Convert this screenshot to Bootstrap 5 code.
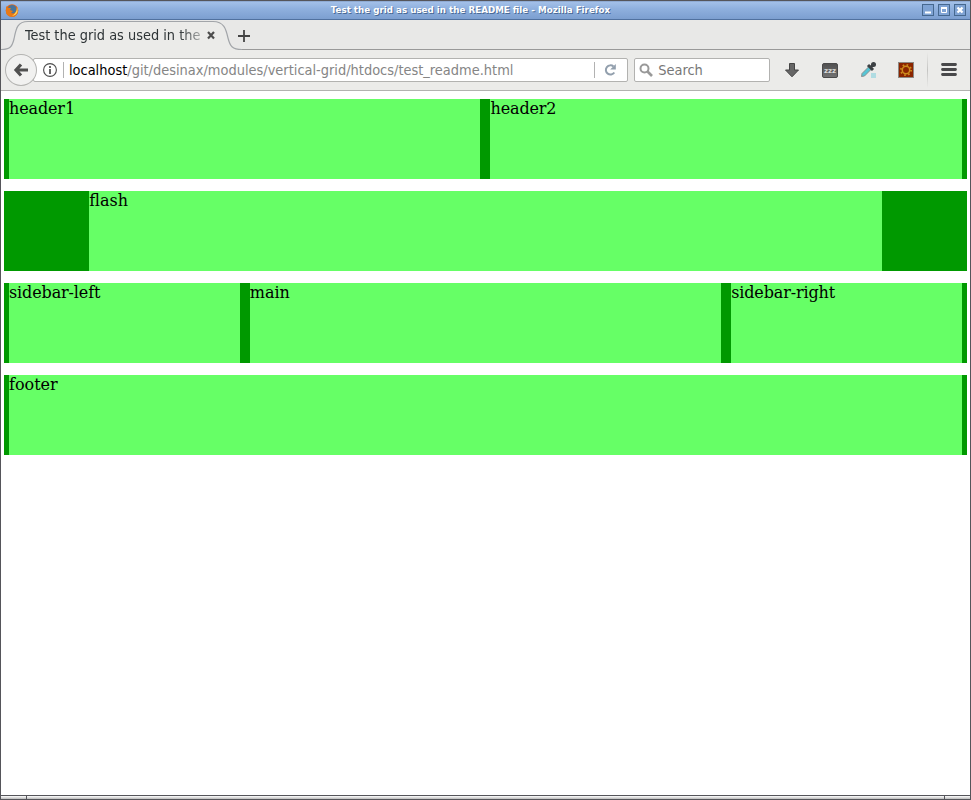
<!DOCTYPE html>
<html lang="en">
<head>
<meta charset="utf-8">
<meta name="viewport" content="width=device-width, initial-scale=1">
<title>Test the grid as used in the README file</title>
<link rel="stylesheet" href="https://cdn.jsdelivr.net/npm/bootstrap@5.3.0/dist/css/bootstrap.min.css">
<style>
body { font-family: "DejaVu Sans", sans-serif; background: #fff; }
svg { display: block; flex: none; }
.window { height: 800px; border: 1px solid #55555a; }
.titlebar { height: 19px; background: linear-gradient(#a3c0e8, #8fb0de 40%, #7c9fd0); border-bottom: 1px solid #50719f; border-top: 1px solid #8fabd4; padding: 0 4px; }
.caption { font-size: 8.74px; font-weight: bold; color: #fff; text-shadow: 1px 1px 0 #4a6a96; line-height: 17px; white-space: nowrap; }
.winbtn { width: 12px; height: 12px; margin-top: -1px; border: 1px solid #46688f; background: #7fa3d4; }
.ui-text { font-family: "DejaVu Sans Condensed", "DejaVu Sans", sans-serif; font-stretch: condensed; white-space: nowrap; }
.tabstrip { height: 29px; background: #e8e8e7; }
.tab { width: 241px; height: 30px; padding-left: 24px; }
.tab-label { width: 176px; font-size: 14.4px; line-height: 30px; color: #2e3436; -webkit-mask-image: linear-gradient(to right, #000 154px, rgba(0,0,0,.35) 176px); }
.plus { margin: 8px 0 0 -5px; }
.toolbar { height: 42px; background: #ebebe9; border-top: 1px solid #999; border-bottom: 1px solid #b2b2b0; padding-left: 4px; }
.back { width: 32px; height: 32px; border: 1px solid #b3b3b1; background: #f1f1f0; z-index: 1; }
.urlbar { width: 596px; height: 24px; margin-left: -4px; border: 1px solid #b2b2b0; border-radius: 2px; background: #fff; }
.info { margin-left: 7px; }
.reload { margin: 0 9px 0 7px; }
.address { font-size: 14.44px; color: #858585; line-height: 22px; padding-left: 5px; }
.address span { color: #000; }
.bar { width: 1px; height: 16px; background: #b2b2b2; }
.searchbox { width: 136px; height: 24px; margin-left: 6px; border: 1px solid #b2b2b0; border-radius: 2px; background: #fff; color: #777; font-size: 14.47px; line-height: 22px; }
.page { padding: 8px 3.1px 0 3px; height: 704px; font-family: "DejaVu Serif", serif; font-size: 16px; line-height: 19px; color: #000; }
.band { height: 80px; margin-bottom: 12px; background: #090; }
.band > div { padding: 0 5px; }
.cell { height: 80px; background: #6f6; }
.tight { letter-spacing: -.13px; }
.frame-foot { height: 4px; border-top: 1px solid #55555a; background: linear-gradient(#fff, #bbb); }
.grip { width: 26px; border-right: 1px solid #55555a; }
.grip.right-end { border-right: 0; border-left: 1px solid #55555a; }
</style>
</head>
<body>
<div class="window d-flex flex-column overflow-hidden">
  <header class="titlebar d-flex align-items-center">
    <svg width="14" height="14" viewBox="0 0 14 14"><circle cx="7" cy="6.5" r="6.3" fill="#df6517"/><circle cx="7.2" cy="5.2" r="4.2" fill="#48759b"/><path d="M1 2L3 4L6 4L5 6L8 7L6 9L9 10L12 7L12 3Q15 10 9 12.7Q3 13.5 1 9Z" fill="#e87916"/><path d="M12 3Q14 8 10 11L7 12Q12 9 12 3Z" fill="#ffd85b"/></svg>
    <div class="caption flex-grow-1 text-center">Test the grid as used in the README file - Mozilla Firefox</div>
    <div class="d-flex gap-1">
      <div class="winbtn"><svg width="10" height="10"><path d="M2 7.5H8" stroke="#fff" stroke-width="2"/></svg></div>
      <div class="winbtn"><svg width="10" height="10"><path d="M2.5 3H7.5V7.5H2.5Z" fill="none" stroke="#fff"/><path d="M2 3H8" stroke="#fff" stroke-width="2"/></svg></div>
      <div class="winbtn"><svg width="10" height="10"><path d="M2.5 2.5L7.5 7.5M7.5 2.5L2.5 7.5" stroke="#fff" stroke-width="2.3"/></svg></div>
    </div>
  </header>

  <div class="tabstrip d-flex">
    <div class="tab position-relative d-flex align-items-center">
      <svg class="position-absolute top-0 start-0" width="241" height="31"><path d="M0 29.5C9 29.5 11 27 13 19C15 9 16 1.5 27 1.5H212C223 1.5 225 9 227 18C229 26 231 29.5 241 29.5V31H0Z" fill="#ebebe9"/><path d="M0 29.5C9 29.5 11 27 13 19C15 9 16 1.5 27 1.5H212C223 1.5 225 9 227 18C229 26 231 29.5 241 29.5" fill="none" stroke="#a2a5a9" stroke-width="1.2"/></svg>
      <div class="tab-label ui-text position-relative">Test the grid as used in the</div>
      <svg class="position-relative ms-1" width="12" height="12"><path d="M3 3L9 9.5M9 3L3 9.5" stroke="#4d4d4d" stroke-width="2.2"/></svg>
    </div>
    <svg class="plus" width="14" height="16"><path d="M1 8H13M7 2V14" stroke="#444" stroke-width="1.8"/></svg>
  </div>

  <div class="toolbar d-flex align-items-center">
    <div class="back rounded-circle d-flex align-items-center justify-content-center"><svg width="16" height="16"><path d="M8 2.5L3 8L8 13.5M3.5 8H15" fill="none" stroke="#505050" stroke-width="3.2"/></svg></div>
    <div class="urlbar d-flex align-items-center">
      <svg class="info" width="18" height="16"><circle cx="9" cy="8" r="6.4" fill="none" stroke="#4d4d4d" stroke-width="1.1"/><path d="M9 7V12M9 4V6" stroke="#4d4d4d" stroke-width="1.7"/></svg>
      <div class="bar ms-1"></div>
      <div class="address ui-text flex-grow-1"><span>localhost</span>/git/desinax/modules/vertical-grid/htdocs/test_readme.html</div>
      <div class="bar"></div>
      <svg class="reload" width="16" height="16"><path d="M12.3 10.5A4.6 4.6 0 1 1 11.5 4.5" fill="none" stroke="#929fad" stroke-width="2"/><path d="M13.8 2V7.6H8.2Z" fill="#929fad"/></svg>
    </div>
    <div class="searchbox ui-text d-flex align-items-center">
      <svg class="ms-1" width="15" height="16"><circle cx="5.5" cy="6.5" r="4" fill="none" stroke="#999" stroke-width="2"/><path d="M8.5 9.5L13 14" stroke="#999" stroke-width="2.7"/></svg>
      <span class="ms-1">Search</span>
    </div>
    <svg width="200" height="40" viewBox="770 50 200 40">
      <defs><linearGradient id="panel" x2="0" y2="1"><stop stop-color="#505050"/><stop offset="1" stop-color="#747474"/></linearGradient><linearGradient id="divider" x2="0" y2="1"><stop stop-color="#ebebe9"/><stop offset=".5" stop-color="#c4c4c2"/><stop offset="1" stop-color="#ebebe9"/></linearGradient></defs>
      <path d="M789.5 63.5H794.5V70H798.5L792 76.8L785.5 70H789.5Z" fill="#666" stroke="#444"/>
      <rect x="822.5" y="63.5" width="15" height="14" rx="1.5" fill="url(#panel)" stroke="#4b4b4b"/>
      <text x="830" y="72.5" text-anchor="middle" font-size="7" font-weight="bold" fill="#ddd">zzz</text>
      <path d="M861.5 76.5L862 73.5L869 66.5L871.5 69L864.5 76Z" fill="#55c5d5" stroke="#888" stroke-width=".9"/>
      <path d="M868 65L873 70M871 67L874.5 63.5" stroke="#3d4144" stroke-width="3"/><circle cx="873.5" cy="64.5" r="2.5" fill="#3d4144"/><rect x="871" y="73" width="5" height="5" fill="#b0dce2"/>
      <rect x="898.5" y="62.5" width="15" height="15" fill="#8b2500" stroke="#8d8984"/><circle cx="906" cy="70" r="3.7" fill="none" stroke="#ce8b1c" stroke-width="1.5"/><circle cx="906" cy="70" r="5.1" fill="none" stroke="#ce8b1c" stroke-width="1.8" stroke-dasharray="1.6 2.405"/>
      <path d="M942.5 64.5H955.5M942.5 69.5H955.5M942.5 74.5H955.5" stroke="#48484a" stroke-width="2.8" stroke-linecap="round"/>
      <rect x="927" y="52" width="1" height="36" fill="url(#divider)"/>
    </svg>
  </div>

  <main class="page flex-shrink-0">
    <div class="band row g-0"><div class="col-6"><div class="cell tight">header1</div></div><div class="col-6"><div class="cell tight">header2</div></div></div>
    <div class="band row g-0"><div class="col-10 offset-1"><div class="cell">flash</div></div></div>
    <div class="band row g-0"><div class="col-3"><div class="cell tight">sidebar-left</div></div><div class="col-6"><div class="cell">main</div></div><div class="col-3"><div class="cell tight">sidebar-right</div></div></div>
    <div class="band row g-0"><div class="col-12"><div class="cell">footer</div></div></div>
  </main>
  <footer class="frame-foot d-flex justify-content-between"><div class="grip"></div><div class="grip right-end"></div></footer>
</div>
<script src="https://cdn.jsdelivr.net/npm/bootstrap@5.3.0/dist/js/bootstrap.bundle.min.js"></script>
</body>
</html>
